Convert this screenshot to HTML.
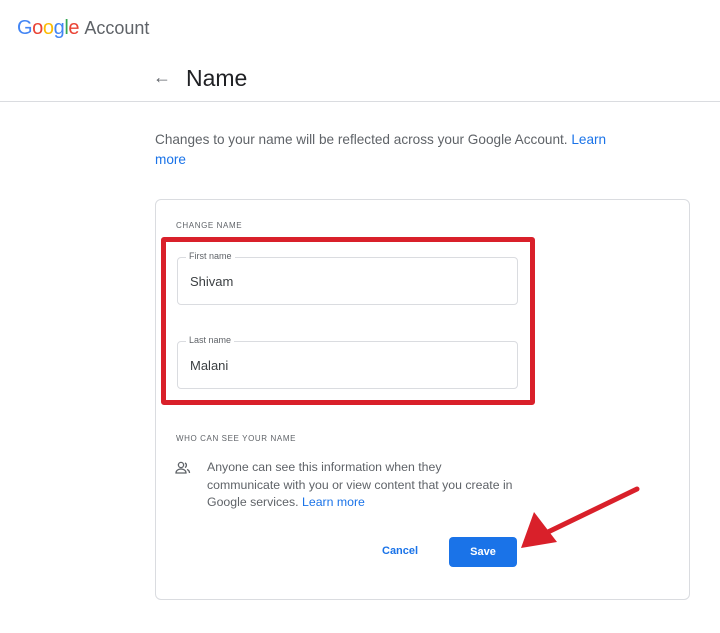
<!DOCTYPE html>
<html><head><meta charset="utf-8"><style>
body{margin:0;width:720px;height:633px;background:#fff;font-family:"Liberation Sans",Arial,sans-serif;position:relative;overflow:hidden}
.a{position:absolute}
.lbl{font-size:8px;letter-spacing:.6px;color:#5f6368}
.fld{position:absolute;left:177px;width:339px;height:46px;border:1px solid #dadce0;border-radius:4px}
.fld .l{position:absolute;top:-7px;left:8px;background:#fff;padding:0 3px;font-size:9px;color:#5f6368}
.fld .v{position:absolute;left:12px;top:16px;font-size:13px;color:#3c4043}
</style></head><body>
<div class="a" style="left:17px;top:17px;font-size:20px;letter-spacing:-.4px"><span style="color:#4285f4">G</span><span style="color:#ea4335">o</span><span style="color:#fbbc05">o</span><span style="color:#4285f4">g</span><span style="color:#34a853">l</span><span style="color:#ea4335">e</span> <span style="color:#5f6368;font-size:18px;letter-spacing:0">Account</span></div>
<div class="a" style="left:153px;top:67px;font-size:18px;color:#5f6368">&#8592;</div>
<div class="a" style="left:186px;top:65px;font-size:23px;color:#202124">Name</div>
<div class="a" style="left:0;top:101px;width:720px;height:1px;background:#dadce0"></div>
<div class="a" style="left:155px;top:130px;width:465px;font-size:13.6px;line-height:20px;color:#5f6368">Changes to your name will be reflected across your Google Account. <span style="color:#1a73e8">Learn more</span></div>
<div class="a" style="left:155px;top:199px;width:533px;height:399px;border:1px solid #dadce0;border-radius:6px"></div>
<div class="a lbl" style="left:176px;top:221px">CHANGE NAME</div>
<div class="a" style="left:161px;top:237px;width:364px;height:158px;border:5px solid #d9202a;border-radius:3px"></div>
<div class="fld" style="top:257px"><div class="l">First name</div><div class="v">Shivam</div></div>
<div class="fld" style="top:341px"><div class="l">Last name</div><div class="v">Malani</div></div>
<div class="a lbl" style="left:176px;top:434px">WHO CAN SEE YOUR NAME</div>
<svg class="a" style="left:175px;top:461px" width="16" height="14" viewBox="0 0 16 14"><circle cx="6" cy="4" r="2.6" fill="none" stroke="#5f6368" stroke-width="1.3"/><path d="M1 12c0-3 3-4 5-4s5 1 5 4z" fill="none" stroke="#5f6368" stroke-width="1.3"/><path d="M10 2a2.5 2.5 0 010 4.5M12 8.5c1.5.5 2.5 1.5 2.5 3.5" fill="none" stroke="#5f6368" stroke-width="1.3"/></svg>
<div class="a" style="left:207px;top:459px;width:330px;font-size:12.3px;line-height:17.5px;color:#5f6368">Anyone can see this information when they<br>communicate with you or view content that you create in<br>Google services. <span style="color:#1a73e8">Learn more</span></div>
<div class="a" style="left:382px;top:545px;font-size:11px;font-weight:bold;color:#1a73e8">Cancel</div>
<div class="a" style="left:449px;top:537px;width:68px;height:30px;background:#1a73e8;border-radius:4px;color:#fff;font-size:11px;font-weight:bold;text-align:center;line-height:30px">Save</div>
<svg class="a" style="left:0;top:0" width="720" height="633"><path d="M637 489L548 532" stroke="#d9202a" stroke-width="5" stroke-linecap="round"/><path d="M521 548L534 512L557 542Z" fill="#d9202a"/></svg>
</body></html>
